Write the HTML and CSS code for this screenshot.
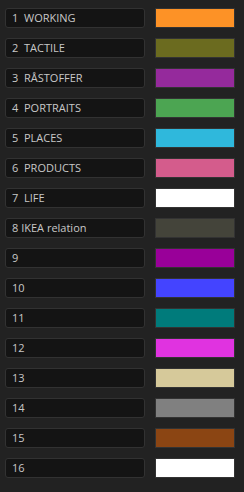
FILE: index.html
```html
<!DOCTYPE html>
<html>
<head>
<meta charset="utf-8">
<link rel="stylesheet" href="styles.css">
</head>
<body>
<div class="list">
  <div class="row"><div class="field">1  WORKING</div><div class="swatch" style="background:#fd9226"></div></div>
  <div class="row"><div class="field">2  TACTILE</div><div class="swatch" style="background:#6b6b1f"></div></div>
  <div class="row"><div class="field">3  RÅSTOFFER</div><div class="swatch" style="background:#952a9c"></div></div>
  <div class="row"><div class="field">4  PORTRAITS</div><div class="swatch" style="background:#4ca552"></div></div>
  <div class="row"><div class="field">5  PLACES</div><div class="swatch" style="background:#2fb8dc"></div></div>
  <div class="row"><div class="field">6  PRODUCTS</div><div class="swatch" style="background:#d45c8c"></div></div>
  <div class="row"><div class="field">7  LIFE</div><div class="swatch" style="background:#ffffff"></div></div>
  <div class="row"><div class="field">8 IKEA relation</div><div class="swatch" style="background:#44443a"></div></div>
  <div class="row"><div class="field">9</div><div class="swatch" style="background:#990099"></div></div>
  <div class="row"><div class="field">10</div><div class="swatch" style="background:#4444ff"></div></div>
  <div class="row"><div class="field">11</div><div class="swatch" style="background:#007b7b"></div></div>
  <div class="row"><div class="field">12</div><div class="swatch" style="background:#e033e0"></div></div>
  <div class="row"><div class="field">13</div><div class="swatch" style="background:#d6c99a"></div></div>
  <div class="row"><div class="field">14</div><div class="swatch" style="background:#808080"></div></div>
  <div class="row"><div class="field">15</div><div class="swatch" style="background:#8b4513"></div></div>
  <div class="row"><div class="field">16</div><div class="swatch" style="background:#ffffff"></div></div>
</div>
</body>
</html>
```
FILE: styles.css
```css
html, body {
  margin: 0;
  padding: 0;
  background: #222222;
  height: 100%;
}
.list {
  display: flex;
  flex-direction: column;
  gap: 10px;
  padding: 8px 9px 0 5px;
}
.row {
  display: flex;
  align-items: center;
  justify-content: space-between;
  height: 20px;
}
.field {
  box-sizing: border-box;
  width: 140px;
  height: 20px;
  background: #141414;
  border: 1px solid #323232;
  border-radius: 3px;
  color: #c8c8c8;
  font-family: "Open Sans", sans-serif;
  font-size: 11px;
  line-height: 18px;
  padding-left: 6px;
  white-space: pre;
}
.swatch {
  box-sizing: border-box;
  width: 80px;
  height: 20px;
  border: 1px solid #333333;
}
```
